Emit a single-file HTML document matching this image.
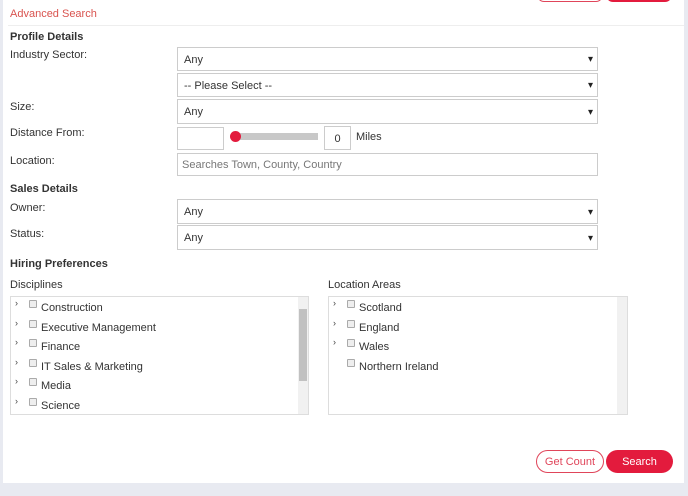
<!DOCTYPE html>
<html><head><style>
*{box-sizing:border-box;margin:0;padding:0}
body{width:688px;height:496px;background:#e8eaf1;font-family:"Liberation Sans",sans-serif;font-size:11px;color:#333;position:relative;overflow:hidden}
.p{position:absolute;left:3px;top:-5px;width:681px;height:488px;background:#fff}
.a{position:absolute;white-space:nowrap}
.b{font-weight:bold}
.sel{position:absolute;left:177px;width:421px;border:1px solid #ccc;background:#fff;padding-left:6px;font-size:11px}
.sel:after{content:"▾";position:absolute;right:4px;top:0;font-size:10px;color:#222}
.inp{position:absolute;border:1px solid #ccc;background:#fff}
.box{position:absolute;top:296px;height:119px;border:1px solid #ddd;background:#fff}
.sb{position:absolute;right:0;top:0;width:10px;height:100%;background:#f1f1f1}
.it{position:absolute;white-space:nowrap;font-size:11px}
.cb{display:inline-block;width:8px;height:8px;border:1px solid #aaa;background:#eee;border-radius:1px;margin-right:4px;vertical-align:3px}
.ch{position:absolute;font-size:9px;color:#444}
.btn{position:absolute;top:450px;height:23px;border-radius:12px;text-align:center;font-size:11px}
</style></head><body>
<div class="p"></div>
<div style="position:absolute;left:537px;top:-12px;width:66px;height:14px;border:1px solid #e0455a;border-radius:8px;background:#fff"></div>
<div style="position:absolute;left:606px;top:-12px;width:66px;height:14px;border-radius:8px;background:#e31b3d"></div>
<div class="a" style="left:10px;top:8px;color:#d9534f">Advanced Search</div>
<div style="position:absolute;left:8px;top:25px;width:676px;height:1px;background:#eee"></div>
<div class="a b" style="left:10px;top:31px">Profile Details</div>
<div class="a" style="left:10px;top:49px">Industry Sector:</div>
<div class="sel" style="top:47px;height:24px;line-height:24px">Any</div>
<div class="sel" style="top:73px;height:24px;line-height:24px">-- Please Select --</div>
<div class="a" style="left:10px;top:101px">Size:</div>
<div class="sel" style="top:99px;height:25px;line-height:25px">Any</div>
<div class="a" style="left:10px;top:127px">Distance From:</div>
<div class="inp" style="left:177px;top:127px;width:47px;height:23px"></div>
<div style="position:absolute;left:237px;top:133px;width:81px;height:7px;background:#c8c8c8"></div>
<div style="position:absolute;left:230px;top:131px;width:11px;height:11px;border-radius:50%;background:#e31b3d"></div>
<div class="inp" style="left:324px;top:126px;width:27px;height:24px;text-align:center;line-height:24px">0</div>
<div class="a" style="left:356px;top:131px">Miles</div>
<div class="a" style="left:10px;top:155px">Location:</div>
<div class="inp" style="left:177px;top:153px;width:421px;height:23px;color:#777;padding-left:4px;line-height:22px">Searches Town, County, Country</div>
<div class="a b" style="left:10px;top:183px">Sales Details</div>
<div class="a" style="left:10px;top:202px">Owner:</div>
<div class="sel" style="top:199px;height:25px;line-height:25px">Any</div>
<div class="a" style="left:10px;top:228px">Status:</div>
<div class="sel" style="top:225px;height:25px;line-height:25px">Any</div>
<div class="a b" style="left:10px;top:258px">Hiring Preferences</div>
<div class="a" style="left:10px;top:279px">Disciplines</div>
<div class="a" style="left:328px;top:279px">Location Areas</div>
<div class="box" style="left:10px;width:299px"><div class="sb"><div style="position:absolute;left:1px;top:12px;width:8px;height:72px;background:#c1c1c1"></div></div></div>
<div class="box" style="left:328px;width:300px"><div class="sb"></div></div>
<div class="ch" style="left:15px;top:298px">›</div><div class="it" style="left:29px;top:300px"><span class="cb"></span>Construction</div>
<div class="ch" style="left:15px;top:318px">›</div><div class="it" style="left:29px;top:320px"><span class="cb"></span>Executive Management</div>
<div class="ch" style="left:15px;top:337px">›</div><div class="it" style="left:29px;top:339px"><span class="cb"></span>Finance</div>
<div class="ch" style="left:15px;top:357px">›</div><div class="it" style="left:29px;top:359px"><span class="cb"></span>IT Sales &amp; Marketing</div>
<div class="ch" style="left:15px;top:376px">›</div><div class="it" style="left:29px;top:378px"><span class="cb"></span>Media</div>
<div class="ch" style="left:15px;top:396px">›</div><div class="it" style="left:29px;top:398px"><span class="cb"></span>Science</div>
<div class="ch" style="left:333px;top:298px">›</div><div class="it" style="left:347px;top:300px"><span class="cb"></span>Scotland</div>
<div class="ch" style="left:333px;top:318px">›</div><div class="it" style="left:347px;top:320px"><span class="cb"></span>England</div>
<div class="ch" style="left:333px;top:337px">›</div><div class="it" style="left:347px;top:339px"><span class="cb"></span>Wales</div>
<div class="it" style="left:347px;top:359px"><span class="cb"></span>Northern Ireland</div>
<div class="btn" style="left:536px;width:68px;border:1px solid #e0455a;color:#e0455a;background:#fff;line-height:22px">Get Count</div>
<div class="btn" style="left:606px;width:67px;background:#e31b3d;color:#fff;line-height:24px">Search</div>
</body></html>
